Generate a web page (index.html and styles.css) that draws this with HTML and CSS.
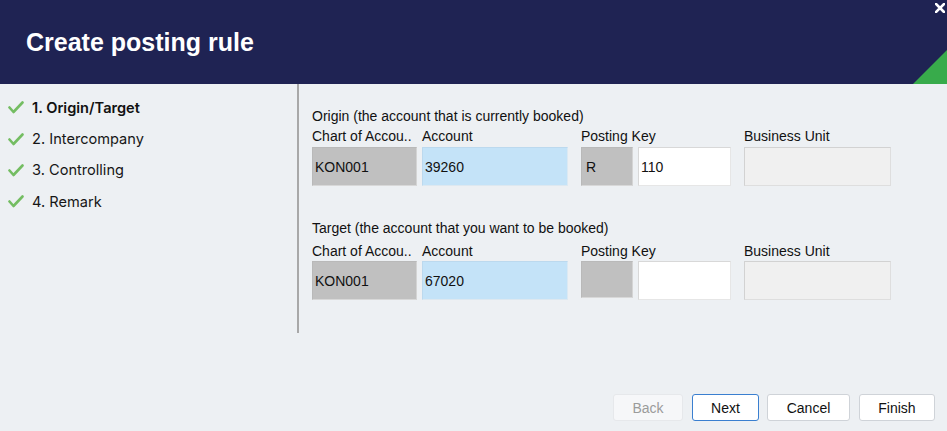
FILE: index.html
```html
<!DOCTYPE html>
<html lang="en">
<head>
<meta charset="utf-8">
<title>Create posting rule</title>
<link rel="stylesheet" href="styles.css">
</head>
<body>
<div class="dialog">
  <header class="header">
    <h1 class="title">Create posting rule</h1>
    <svg class="close" viewBox="0 0 10 10"><path d="M1 1 L9 9 M9 1 L1 9" stroke="#ffffff" stroke-width="2.6" stroke-linecap="square"/></svg>
    <span class="corner"></span>
  </header>
  <div class="main">
    <nav class="steps">
      <div class="step active"><svg class="check" viewBox="0 0 16 13"><path d="M1.5 6.5 L5.5 11 L14.5 1.5" fill="none" stroke="#74bd62" stroke-width="2.6" stroke-linecap="round" stroke-linejoin="round"/></svg><span>1. Origin/Target</span></div>
      <div class="step"><svg class="check" viewBox="0 0 16 13"><path d="M1.5 6.5 L5.5 11 L14.5 1.5" fill="none" stroke="#74bd62" stroke-width="2.6" stroke-linecap="round" stroke-linejoin="round"/></svg><span>2. Intercompany</span></div>
      <div class="step"><svg class="check" viewBox="0 0 16 13"><path d="M1.5 6.5 L5.5 11 L14.5 1.5" fill="none" stroke="#74bd62" stroke-width="2.6" stroke-linecap="round" stroke-linejoin="round"/></svg><span>3. Controlling</span></div>
      <div class="step"><svg class="check" viewBox="0 0 16 13"><path d="M1.5 6.5 L5.5 11 L14.5 1.5" fill="none" stroke="#74bd62" stroke-width="2.6" stroke-linecap="round" stroke-linejoin="round"/></svg><span>4. Remark</span></div>
    </nav>
    <section class="form">
      <div class="group origin">
        <div class="group-title">Origin (the account that is currently booked)</div>
        <div class="labels">
          <span class="lbl w-chart">Chart of Accou..</span>
          <span class="lbl w-acct">Account</span>
          <span class="lbl w-key">Posting Key</span>
          <span class="lbl w-bu">Business Unit</span>
        </div>
        <div class="fields">
          <div class="field gray w-chart">KON001</div>
          <div class="field blue w-acct">39260</div>
          <div class="field gray w-keyg">R</div>
          <div class="field white w-keyw">110</div>
          <div class="field dis w-bu"></div>
        </div>
      </div>
      <div class="group target">
        <div class="group-title">Target (the account that you want to be booked)</div>
        <div class="labels">
          <span class="lbl w-chart">Chart of Accou..</span>
          <span class="lbl w-acct">Account</span>
          <span class="lbl w-key">Posting Key</span>
          <span class="lbl w-bu">Business Unit</span>
        </div>
        <div class="fields">
          <div class="field gray w-chart">KON001</div>
          <div class="field blue w-acct">67020</div>
          <div class="field gray w-keyg short"></div>
          <div class="field white w-keyw"></div>
          <div class="field dis w-bu"></div>
        </div>
      </div>
    </section>
  </div>
  <footer class="footer">
    <button class="btn disabled">Back</button>
    <button class="btn primary">Next</button>
    <button class="btn">Cancel</button>
    <button class="btn">Finish</button>
  </footer>
</div>
</body>
</html>
```
FILE: styles.css
```css
* { box-sizing: border-box; }
html, body { margin: 0; padding: 0; }
body {
  background: #edf0f3;
  font-family: "Liberation Sans", Arial, sans-serif;
  color: #111;
  width: 947px;
  height: 431px;
  overflow: hidden;
}
.dialog {
  display: flex;
  flex-direction: column;
  height: 431px;
}
.header {
  position: relative;
  height: 84px;
  background: #1f2353;
  overflow: hidden;
  flex: none;
}
.title {
  margin: 0;
  padding: 28px 0 0 26px;
  font-family: "Liberation Sans", Arial, sans-serif;
  font-weight: 700;
  font-size: 25px;
  line-height: 29px;
  color: #ffffff;
}
.close {
  position: absolute;
  left: 935px;
  top: 3px;
  width: 10px;
  height: 10px;
}
.corner {
  position: absolute;
  right: 0;
  bottom: 0;
  width: 0;
  height: 0;
  border-style: solid;
  border-width: 0 0 34px 34px;
  border-color: transparent transparent #38ab4b transparent;
}
.main {
  display: flex;
  height: 249px;
  flex: none;
}
.steps {
  width: 299px;
  border-right: 2px solid #a8a8a8;
  padding-top: 8px;
  font-family: Inter, "Noto Sans", sans-serif;
  font-size: 14.6px;
  color: #161616;
}
.step {
  display: flex;
  align-items: center;
  height: 31.4px;
  padding-left: 8px;
}
.step.active { font-weight: 600; color: #111; }
.check {
  width: 16px;
  height: 13px;
  margin-right: 8px;
  flex: none;
}
.form {
  padding: 24px 0 0 13px;
  font-size: 14px;
}
.group-title { line-height: 17px; }
.labels {
  display: flex;
  line-height: 17px;
  margin-top: 3px;
}
.origin .fields { margin-top: 2px; }
.target { margin-top: 34px; }
.target .labels { margin-top: 6px; }
.target .fields { margin-top: 1px; }
.lbl { display: block; white-space: nowrap; }
.lbl.w-chart { width: 110px; }
.lbl.w-acct { width: 159px; }
.lbl.w-key { width: 163px; }
.fields {
  display: flex;
  align-items: flex-start;
  height: 39px;
}
.field {
  height: 39px;
  padding: 0 3px 0 2px;
  display: flex;
  align-items: center;
  font-size: 14px;
  color: #111;
  border: 1px solid transparent;
}
.field.w-chart { width: 105px; }
.field.w-acct { width: 146px; margin-left: 5px; }
.field.w-keyg { width: 52px; margin-left: 13px; padding-left: 4px; }
.field.w-keyw { width: 93px; margin-left: 5px; padding-left: 2px; }
.field.w-bu { width: 147px; margin-left: 13px; }
.field.short { height: 37px; }
.gray {
  background: #c0c0c0;
  border-color: #b9b9b9 #d4d4d4 #d8d8d8 #b9b9b9;
}
.blue {
  background: #c4e3f8;
  border-color: #bcd9ee #dbe9f3 #dde8f0 #bcd9ee;
}
.white {
  background: #ffffff;
  border-color: #d8d8d8 #e6e6e6 #e6e6e6 #d8d8d8;
}
.dis {
  background: #f0f0f0;
  border-color: #d2d2d2 #dedede #dedede #d2d2d2;
}
.footer {
  flex: 1;
  display: flex;
  justify-content: flex-end;
  align-items: flex-start;
  padding: 61px 12px 0 0;
  gap: 8px;
}
.btn {
  height: 27px;
  border: 1px solid #cfd3d8;
  border-radius: 3px;
  background: #ffffff;
  font-family: "Liberation Sans", Arial, sans-serif;
  font-size: 14px;
  color: #111;
  padding: 0;
  margin: 0;
}
.btn.disabled { width: 70px; background: #f6f7f9; border-color: #e6e8eb; color: #9b9b9b; margin-right: 1px; }
.btn.primary { width: 67px; border-color: #3a7fd0; }
.btn:nth-child(3) { width: 83px; margin-right: 1px; }
.btn:nth-child(4) { width: 76px; }
```
